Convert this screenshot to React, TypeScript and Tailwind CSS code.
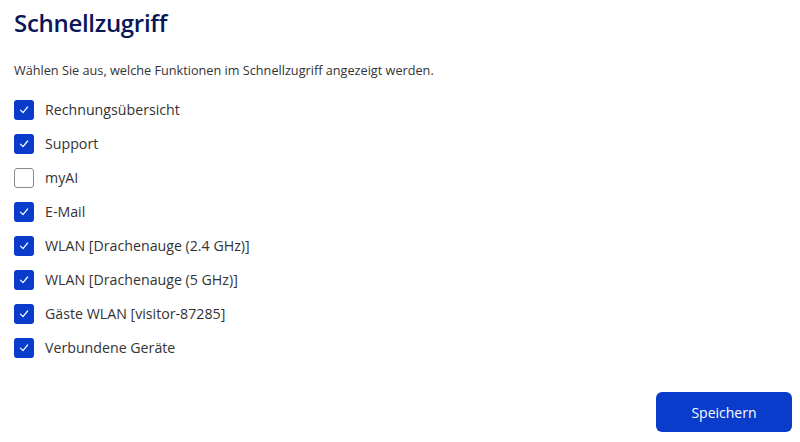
import React, { useState } from "react";

const items = [
  { label: "Rechnungsübersicht", checked: true },
  { label: "Support", checked: true },
  { label: "myAI", checked: false },
  { label: "E-Mail", checked: true },
  { label: "WLAN [Drachenauge (2.4 GHz)]", checked: true },
  { label: "WLAN [Drachenauge (5 GHz)]", checked: true },
  { label: "Gäste WLAN [visitor-87285]", checked: true },
  { label: "Verbundene Geräte", checked: true },
];

export default function App() {
  const [state, setState] = useState(items.map((i) => i.checked));
  return (
    <div
      className="w-[800px] h-[442px] bg-white flex flex-col pl-[14px] pr-[8px] pt-[6px]"
      style={{ fontFamily: '"Open Sans", "Noto Sans", sans-serif' }}
    >
      <h1 className="text-[24px] leading-[34px] font-semibold text-[#0a1657] tracking-[-0.3px]">
        Schnellzugriff
      </h1>
      <p className="mt-[21px] text-[12.7px] leading-[18px] text-[#333]">
        Wählen Sie aus, welche Funktionen im Schnellzugriff angezeigt werden.
      </p>
      <div className="mt-[14px] flex flex-col">
        {items.map((it, i) => (
          <label key={it.label} className="flex items-center h-[34px] gap-[11px] cursor-pointer">
            <span
              onClick={() => setState((s) => s.map((v, j) => (j === i ? !v : v)))}
              className={
                state[i]
                  ? "w-[20px] h-[20px] rounded-[3px] bg-[#0a3ccc] flex items-center justify-center"
                  : "w-[20px] h-[20px] rounded-[3px] border border-[#8a8a8a] bg-white"
              }
            >
              {state[i] && (
                <svg width="12" height="12" viewBox="0 0 12 12" fill="none">
                  <path d="M2.5 6.2 L5 8.7 L9.6 3" stroke="white" strokeWidth="1.2" strokeLinecap="round" strokeLinejoin="round" />
                </svg>
              )}
            </span>
            <span className="text-[14.2px] text-[#333]">{it.label}</span>
          </label>
        ))}
      </div>
      <div className="flex justify-end mt-auto pb-[10px]">
        <button className="w-[136px] h-[40px] rounded-[6px] bg-[#0a3ccc] text-white text-[14px]">
          Speichern
        </button>
      </div>
    </div>
  );
}
